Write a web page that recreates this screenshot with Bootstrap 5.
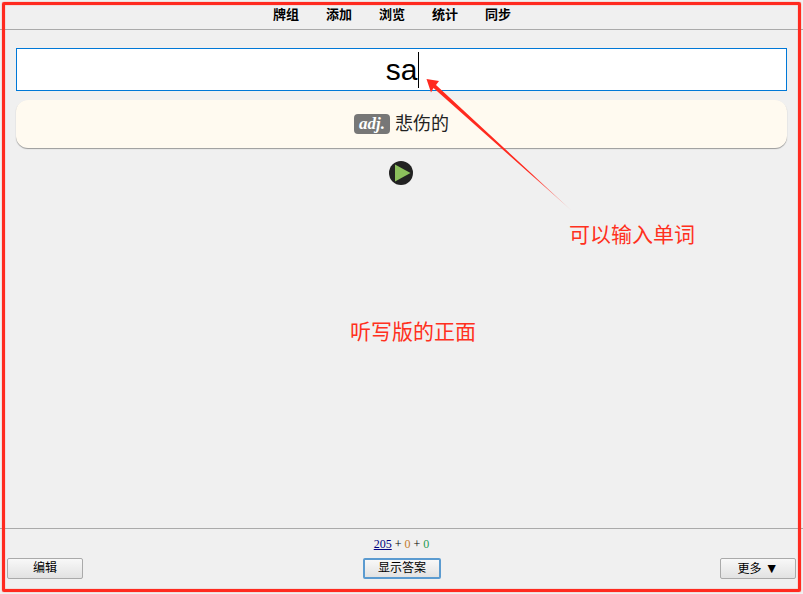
<!DOCTYPE html>
<html lang="zh">
<head>
<meta charset="utf-8">
<title>听写版的正面</title>
<link href="https://cdn.jsdelivr.net/npm/bootstrap@5.3.0/dist/css/bootstrap.min.css" rel="stylesheet">
<style>
html,body{height:100%;}
body{background:#f0f0f0;color:#000;font-family:"Liberation Sans","Noto Sans CJK SC",sans-serif;overflow:hidden;}
.tool-top{height:30px;border-bottom:1px solid #aaa;padding-right:19px;gap:27px;font-size:13px;font-weight:700;line-height:29px;}
.tool-top a{color:#000;text-decoration:none;}
.stage{padding:18px 16px 0;}
.answer-box{height:43px;border:1px solid #0078d7;background:#fff;font-size:30px;line-height:41px;padding-left:2px;}
.caret-bar{display:inline-block;width:1px;height:36px;background:#000;vertical-align:middle;margin-left:1px;margin-top:-4px;}
.meaning{height:48px;margin-top:9px;background:#fffaf0;border-radius:12px;box-shadow:0 1px 1px #999;font-size:18px;gap:5px;color:#222;}
.pos-tag{width:36px;height:20px;background:#777;color:#fff;border-radius:4px;font:italic 700 17px/19px "Liberation Serif",serif;text-align:center;}
.play-wrap{margin-top:12px;line-height:0;padding-right:1px;}
.tool-bottom{height:66px;border-top:1px solid #aaa;padding:0 7px;}
.tally{font:12px/14px "Liberation Serif","Noto Sans CJK SC",serif;padding-top:8px;height:29px;text-align:center;}
.tally a{color:#000080;}
.t-orange{color:#c47a2c;}
.t-green{color:#1f9d55;}
.deck-btn{width:76px;height:21px;padding:0;font-size:12px;line-height:19px;color:#000;border:1px solid #aaa;border-radius:2px;background:linear-gradient(#f8f8f8,#e2e2e2);}
.deck-btn:hover{color:#000;border-color:#aaa;}
.deck-btn-main{width:78px;border:2px solid #5b9bd0;line-height:17px;margin-left:1px;}
.deck-btn-main:hover{border-color:#5b9bd0;}
.tri-mark{font-size:14px;}
.paint-frame{position:absolute;inset:2px;border:3px solid #ff2a1f;border-radius:2px;box-shadow:inset 0 0 1px #ff2a1f,0 0 1px #ff2a1f;pointer-events:none;}
.paint-arrow{position:absolute;left:0;top:0;pointer-events:none;}
.paint-note{position:absolute;color:#ff3020;font-size:21px;line-height:26px;white-space:nowrap;}
.note-a{left:569px;top:222px;}
.note-b{left:350px;top:319px;}
</style>
</head>
<body>
<div class="d-flex flex-column vh-100">
  <nav class="tool-top d-flex justify-content-center flex-shrink-0">
    <a href="#">牌组</a><a href="#">添加</a><a href="#">浏览</a><a href="#">统计</a><a href="#">同步</a>
  </nav>
  <main class="stage flex-grow-1">
    <div class="answer-box text-center">sa<span class="caret-bar"></span></div>
    <div class="meaning d-flex align-items-center justify-content-center">
      <span class="pos-tag">adj.</span><span>悲伤的</span>
    </div>
    <div class="play-wrap text-center">
      <svg width="26" height="26" viewBox="0 0 26 26" aria-label="播放">
        <circle cx="13" cy="13" r="12" fill="#222"/>
        <path d="M7 4.5 L22.5 13 L7 21.5 Z" fill="#8cc05c"/>
      </svg>
    </div>
  </main>
  <footer class="tool-bottom flex-shrink-0">
    <div class="tally"><a href="#">205</a> + <span class="t-orange">0</span> + <span class="t-green">0</span></div>
    <div class="d-flex justify-content-between">
      <button type="button" class="btn deck-btn">编辑</button>
      <button type="button" class="btn deck-btn deck-btn-main">显示答案</button>
      <button type="button" class="btn deck-btn">更多 <span class="tri-mark">▼</span></button>
    </div>
  </footer>
</div>
<svg class="paint-arrow" width="803" height="594" viewBox="0 0 803 594" aria-hidden="true">
  <defs><linearGradient id="fadeTail" gradientUnits="userSpaceOnUse" x1="572" y1="211" x2="530" y2="172"><stop offset="0" stop-color="#ff2a1f" stop-opacity=".2"/><stop offset="1" stop-color="#ff2a1f"/></linearGradient></defs>
  <path d="M426.5 79 L439 81 L436 85 L572 211 L433.5 88 L431 92.5 Z" fill="url(#fadeTail)"/>
</svg>
<div class="paint-note note-a">可以输入单词</div>
<div class="paint-note note-b">听写版的正面</div>
<div class="paint-frame"></div>
<script src="https://cdn.jsdelivr.net/npm/bootstrap@5.3.0/dist/js/bootstrap.bundle.min.js"></script>
</body>
</html>
